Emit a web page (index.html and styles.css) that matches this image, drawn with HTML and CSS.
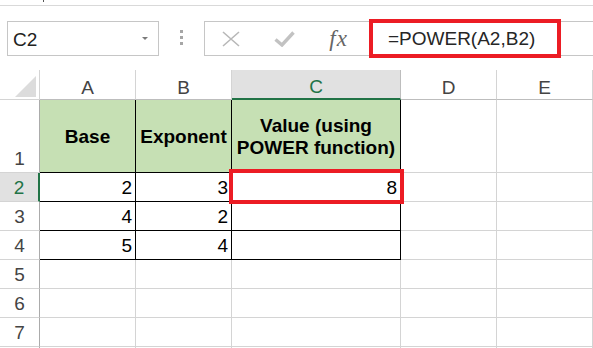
FILE: index.html
```html
<!DOCTYPE html>
<html lang="en">
  <head>
    <meta charset="UTF-8" />
    <meta name="viewport" content="width=device-width, initial-scale=1.0" />
    <title>Excel - POWER function</title>
    <link rel="stylesheet" href="styles.css">
  </head>
  <body>
    <!-- Ribbon edge -->
    <div class="ribbon-edge"><span class="ribbon-tick"></span></div>

    <!-- Formula Bar -->
    <div class="formula-bar">
      <div class="name-box">
        <span class="name-text">C2</span>
        <span class="name-arrow"></span>
      </div>
      <div class="bar-grip">
        <span></span>
        <span></span>
        <span></span>
      </div>
      <div class="formula-box">
        <div class="formula-buttons">
          <svg class="btn-cancel" width="18" height="16" viewBox="0 0 18 16">
            <path d="M1 1l16 14M17 1L1 15" />
          </svg>
          <svg class="btn-enter" width="21" height="16" viewBox="0 0 21 16">
            <path d="M1.5 8.5l6.5 5.5L19.5 1.5" />
          </svg>
          <span class="btn-fx">fx</span>
        </div>
        <div class="formula-input">=POWER(A2,B2)</div>
      </div>
    </div>

    <!-- Sheet -->
    <div class="sheet">
      <div class="corner">
        <svg width="21" height="21" viewBox="0 0 21 21"><polygon points="21,0 21,21 0,21" /></svg>
      </div>
      <div class="col-head">A</div>
      <div class="col-head">B</div>
      <div class="col-head active">C</div>
      <div class="col-head">D</div>
      <div class="col-head">E</div>

      <div class="row-head">1</div>
      <div class="cell title boxed">Base</div>
      <div class="cell title boxed">Exponent</div>
      <div class="cell title boxed">Value (using POWER function)</div>
      <div class="cell"></div>
      <div class="cell"></div>

      <div class="row-head active">2</div>
      <div class="cell num boxed">2</div>
      <div class="cell num boxed">3</div>
      <div class="cell num boxed selected">8<div class="highlight"></div></div>
      <div class="cell"></div>
      <div class="cell"></div>

      <div class="row-head">3</div>
      <div class="cell num boxed">4</div>
      <div class="cell num boxed">2</div>
      <div class="cell num boxed"></div>
      <div class="cell"></div>
      <div class="cell"></div>

      <div class="row-head">4</div>
      <div class="cell num boxed">5</div>
      <div class="cell num boxed">4</div>
      <div class="cell num boxed"></div>
      <div class="cell"></div>
      <div class="cell"></div>

      <div class="row-head">5</div>
      <div class="cell"></div>
      <div class="cell"></div>
      <div class="cell"></div>
      <div class="cell"></div>
      <div class="cell"></div>

      <div class="row-head">6</div>
      <div class="cell"></div>
      <div class="cell"></div>
      <div class="cell"></div>
      <div class="cell"></div>
      <div class="cell"></div>

      <div class="row-head">7</div>
      <div class="cell"></div>
      <div class="cell"></div>
      <div class="cell"></div>
      <div class="cell"></div>
      <div class="cell"></div>

      <!-- next row, only its top edge shows -->
      <div class="row-head edge"></div>
      <div class="cell edge"></div>
      <div class="cell edge"></div>
      <div class="cell edge"></div>
      <div class="cell edge"></div>
      <div class="cell edge"></div>
    </div>
  </body>
</html>
```

FILE: styles.css
```css
* {
  margin: 0;
  padding: 0;
  box-sizing: border-box;
}

body {
  background-color: #fff;
  width: 593px;
  height: 348px;
  overflow: hidden;
  font-family: "Liberation Sans", Arial, sans-serif;
  font-size: 19px;
  color: #000;
}

/* Ribbon edge */
.ribbon-edge {
  height: 6px;
  border-bottom: 1px solid #d9d9d9;
  padding-left: 43px;
}

.ribbon-tick {
  display: block;
  width: 1px;
  height: 2px;
  background-color: #555;
}

/* Formula Bar */
.formula-bar {
  display: flex;
  height: 35px;
  margin-top: 15px;
}

.name-box {
  width: 152px;
  margin-left: 7px;
  border: 1px solid #c6c6c6;
  display: flex;
  align-items: center;
  justify-content: space-between;
  padding: 2px 10px 0 5px;
  color: #222;
}

.name-arrow {
  width: 0;
  height: 0;
  margin-top: -3px;
  border-left: 3px solid transparent;
  border-right: 3px solid transparent;
  border-top: 3px solid #7a7a7a;
}

.bar-grip {
  width: 45px;
  display: flex;
  flex-direction: column;
  align-items: center;
  justify-content: center;
  gap: 3px;
  margin-top: -3px;
}

.bar-grip span {
  width: 3px;
  height: 3px;
  background-color: #a6a6a6;
}

.formula-box {
  flex: 1;
  display: flex;
  align-items: center;
  border: 1px solid #c6c6c6;
  border-right: none;
}

.formula-buttons {
  width: 164px;
  display: grid;
  grid-template-columns: repeat(3, 1fr);
  justify-items: center;
  align-items: center;
}

.formula-buttons svg {
  fill: none;
}

.btn-cancel {
  stroke: #b8b8b8;
  stroke-width: 1.6;
  margin-right: 2px;
}

.btn-enter {
  stroke: #c2c2c2;
  stroke-width: 3.4;
  margin-right: 4px;
}

.btn-fx {
  font-family: "Liberation Serif", "Times New Roman", serif;
  font-style: italic;
  font-size: 23px;
  letter-spacing: 1px;
  color: #666;
  margin-right: 6px;
}

.formula-input {
  width: 192px;
  height: 39px;
  flex-shrink: 0;
  border: 4px solid #ec1c24;
  padding: 1px 0 0 15px;
  line-height: 30px;
  color: #262626;
  white-space: nowrap;
}

/* Sheet */
.sheet {
  display: grid;
  grid-template-columns: 40px 96px 96px 169px 96px 96px;
  grid-template-rows: 30px 73px repeat(6, 29px) 2px;
  margin-top: 14px;
}

.sheet > div {
  display: flex;
  border-right: 1px solid #d4d4d4;
  border-bottom: 1px solid #d4d4d4;
  line-height: 22px;
}

.sheet > .edge {
  border-bottom: none;
}

.corner {
  justify-content: flex-end;
  align-items: flex-end;
  padding: 0 3px 2px 0;
}

.corner svg {
  fill: #dcdcdc;
}

.col-head {
  justify-content: center;
  align-items: flex-end;
  color: #444;
}

.sheet > .col-head {
  border-bottom-color: #bdbdbd;
}

.sheet > .col-head.active {
  background-color: #e1e1e1;
  color: #217346;
  border-bottom: 2px solid #217346;
  border-right-color: #bdbdbd;
}

.row-head {
  justify-content: center;
  align-items: flex-end;
  padding-bottom: 2px;
  color: #444;
}

.sheet > .row-head {
  border-right-color: #ababab;
}

.sheet > .row-head.active {
  background-color: #e1e1e1;
  color: #217346;
  border-right: 2px solid #217346;
}

.num {
  justify-content: flex-end;
  align-items: flex-end;
  padding: 0 3px 2px 0;
}

.title {
  background-color: #c6e0b4;
  font-weight: bold;
  justify-content: center;
  align-items: center;
  text-align: center;
  line-height: 27px;
  padding-top: 2px;
}

.sheet > .boxed {
  border-right-color: #000;
  border-bottom-color: #000;
}

.selected {
  position: relative;
}

.highlight {
  position: absolute;
  left: -3px;
  right: -4px;
  top: -4px;
  bottom: -3px;
  border: 4px solid #ec1c24;
  z-index: 1;
}
```
